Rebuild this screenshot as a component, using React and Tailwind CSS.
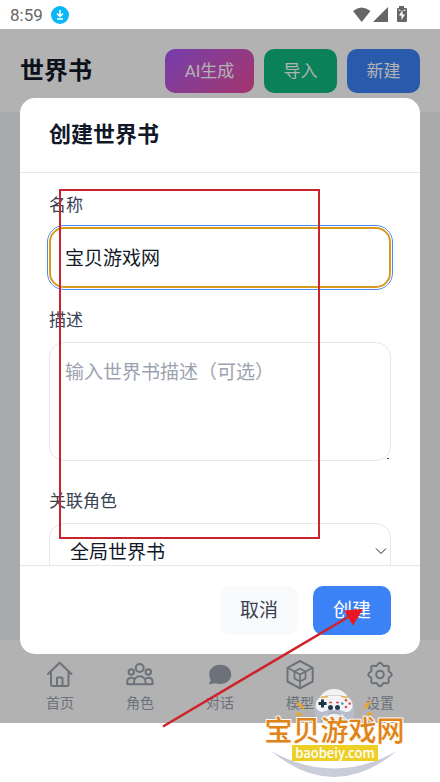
import React from 'react';

const sans = "font-['Roboto','Noto_Sans_CJK_SC',sans-serif]";

function StatusBar() {
  return (
    <div className="flex h-[29px] shrink-0 items-center justify-between bg-white pl-2.5 pr-8 text-[#666]">
      <div className="flex items-center gap-2">
        <span className="text-[17px] leading-5">8:59</span>
        <svg className="size-[18px]" viewBox="0 0 18 18" aria-hidden="true">
          <circle cx="9" cy="9" r="9" fill="#08b8f8" />
          <path d="M9 4v6M6 7.500l3 3 3-3M6 13h6" fill="none" stroke="#fff" strokeWidth="1.600" />
        </svg>
      </div>
      <svg className="h-[17px] w-[56px]" viewBox="0 0 56 17" fill="#666" aria-hidden="true">
        <path d="M1 5Q9.500-2 18.500 5L9.700 16Z" />
        <path d="M21 16L36 1V16Z" />
        <path d="M47 0h5v2h2q1 0 1 1v12q0 1-1 1h-8q-1 0-1-1V3q0-1 1-1h1z" />
        <path d="M50.500 4L47 9.500h2.500V14L53 8.500h-2.500z" fill="#fff" />
        <path d="M46.500 4l2 .5M53.500 4l-2 .5" stroke="#fff" />
      </svg>
    </div>
  );
}

function PageHeader() {
  const button = 'h-11 rounded-[10px] text-[17px] leading-6 text-white';
  return (
    <header className="flex items-center justify-between bg-white px-5 pb-[19px] pt-5">
      <h1 className="text-[24px] font-bold leading-[44px] text-[#111827]">世界书</h1>
      <div className="flex gap-2.5">
        <button type="button" className={`${button} w-[89px] bg-linear-135 from-[#a855f7] to-[#ec4899]`}>AI生成</button>
        <button type="button" className={`${button} w-[73px] bg-[#10b981]`}>导入</button>
        <button type="button" className={`${button} w-[73px] bg-[#3b82f6]`}>新建</button>
      </div>
    </header>
  );
}

function HomeIcon() {
  return (
    <svg className="size-7" viewBox="0 0 28 28" fill="none" stroke="currentColor" strokeWidth="2" strokeLinejoin="round" strokeLinecap="round" aria-hidden="true">
      <path d="M2 14L13.700 2.800 25.500 14M5 12v12.500q0 1.500 1.500 1.500h14.500q1.500 0 1.500-1.500V12" />
      <path d="M11 25.500v-7.500q0-.5.5-.5h4.500q.5 0 .5.5v7.500" />
    </svg>
  );
}

function PeopleIcon() {
  return (
    <svg className="size-7" viewBox="0 0 28 28" fill="none" stroke="currentColor" strokeWidth="2" strokeLinejoin="round" aria-hidden="true">
      <circle cx="13.700" cy="8" r="4" />
      <circle cx="5.300" cy="12" r="2.700" />
      <circle cx="22.300" cy="12" r="2.700" />
      <path d="M8 24.300v-2.300a5.800 5.800 0 0 1 11.600 0v2.300zM8 24.300H1.300v-2.800q0-3.800 4-3.800 2 0 3.200 1.300M19.600 24.300h6.900v-2.800q0-3.800-4-3.800-2 0-3.200 1.300" />
    </svg>
  );
}

function ChatIcon() {
  return (
    <svg className="size-7" viewBox="0 0 28 28" fill="currentColor" aria-hidden="true">
      <path d="M14.200 4.800C20.500 4.800 25.200 9 25.200 14.500s-4.700 9.500-11 9.500c-1.500 0-3-.3-4.200-.7L2.800 24.200l2-4.200C3.700 18.500 3.200 16.500 3.200 14.500 3.200 9 7.900 4.800 14.200 4.800z" />
    </svg>
  );
}

function CubeIcon() {
  return (
    <svg className="size-7 overflow-visible" viewBox="0 0 28 28" fill="none" stroke="currentColor" strokeWidth="2" strokeLinejoin="round" aria-hidden="true">
      <path d="M14 1L26.700 7.800v13.700L14 28.300 1.500 21.500V7.800z" />
      <path d="M14 8.500l5.500 3v7L14 21.500l-5.500-3v-7zM1.500 7.800L14 14.500 26.700 7.800M14 14.500v13.500" strokeWidth="1.700" />
    </svg>
  );
}

const gearPath = Array.from({ length: 96 }, (_, i) => {
  const angle = (i / 96) * Math.PI * 2;
  const radius = 10.5 + 1.2 * Math.cos(angle * 8);
  return `${(14 + radius * Math.cos(angle)).toFixed(2)},${(14.5 + radius * Math.sin(angle)).toFixed(2)}`;
}).join(' ');

function GearIcon() {
  return (
    <svg className="size-7" viewBox="0 0 28 28" fill="none" stroke="currentColor" strokeWidth="2" strokeLinejoin="round" aria-hidden="true">
      <polygon points={gearPath} />
      <circle cx="14" cy="14.500" r="3.800" />
    </svg>
  );
}

const tabs = [
  ['首页', HomeIcon],
  ['角色', PeopleIcon],
  ['对话', ChatIcon],
  ['模型', CubeIcon],
  ['设置', GearIcon],
];

function TabBar() {
  return (
    <nav className="grid h-[83px] shrink-0 grid-cols-5 bg-white px-5 pt-5 text-[#9ca3af]">
      {tabs.map(([label, Icon]) => (
        <a key={label} href="#" className="flex flex-col items-center gap-[5px] text-[14px] leading-5">
          <Icon />
          {label}
        </a>
      ))}
    </nav>
  );
}

function CreateDialog() {
  const label = 'mb-2.5 block text-[17px] leading-6 text-[#374151]';
  const box = 'block w-full rounded-[15px] bg-white text-[19px] leading-7 text-[#111827]';
  return (
    <form role="dialog" aria-label="创建世界书" className="flex max-h-[80%] w-full flex-col overflow-hidden rounded-[15px] bg-white">
      <div className="border-b border-[#e5e7eb] px-[29px] py-5">
        <h2 className="text-[22px] font-bold leading-[34px] text-[#111827]">创建世界书</h2>
      </div>
      <div className="flex min-h-0 flex-1 flex-col gap-5 overflow-hidden px-[29px] pt-5">
        <div>
          <label htmlFor="name" className={label}>名称</label>
          <input id="name" defaultValue="宝贝游戏网" className={`${box} h-[61px] border-2 border-[#d99a20] px-3.5 pb-0.5 outline-1 outline-offset-1 outline-[#4b8cf0]`} />
        </div>
        <div className="pb-2">
          <label htmlFor="description" className={label}>描述</label>
          <div className="relative">
            <textarea id="description" placeholder="输入世界书描述（可选）" className={`${box} h-[119px] resize-none border border-[#e5e7eb] px-[15px] py-4 placeholder:text-[#9ca3af]`} />
            <span className="absolute bottom-0.5 right-0.5 h-px w-0.5 bg-[#444]" />
          </div>
        </div>
        <div>
          <label htmlFor="role" className={label}>关联角色</label>
          <div className="relative">
            <select id="role" className={`${box} h-[59px] appearance-none border border-[#e5e7eb] px-5`}>
              <option>全局世界书</option>
            </select>
            <svg className="pointer-events-none absolute right-1 top-[22px] size-3" viewBox="0 0 12 12" fill="none" stroke="#222" aria-hidden="true">
              <path d="M1 3.500l5 5 5-5" />
            </svg>
          </div>
        </div>
      </div>
      <div className="flex justify-end gap-[15px] border-t border-[#e5e7eb] px-[29px] pb-[19px] pt-5 text-[19px] leading-[29px]">
        <button type="button" className="rounded-[10px] bg-[#f9fafb] px-5 py-2.5 text-[#374151]">取消</button>
        <button type="submit" className="rounded-[10px] bg-[#3b82f6] px-5 py-2.5 text-white">创建</button>
      </div>
    </form>
  );
}

function Watermark() {
  return (
    <div className="pointer-events-none absolute bottom-0 right-[30px] h-[97px] w-[150px]">
      <svg className="absolute inset-0 size-full" viewBox="0 0 150 97" aria-hidden="true">
        <path d="M11 66Q74 101 137 66Q74 118 11 66z" fill="#c9ccd9" />
        <ellipse cx="74" cy="22" rx="17" ry="18" fill="#f3f3f3" />
        <path d="M60 12Q74 8 88 12Q93 14 94 23L94 36Q93 40 89 37L82 29H67L60 37Q56 40 55 36L55 23Q56 14 60 12z" fill="#b9bdcb" />
        <path d="M61 12Q74 9 87 12Q93 15 92.500 22Q91 27 86 27L80 25H68L62 27Q57 26 56 22Q55 15 61 12z" fill="#f4f4f7" />
        <path d="M62 39Q63 29 74 28Q86 29 87 39z" fill="#eff0f3" />
        <path d="M62 37Q66 28 74 28Q82 28 86 37" fill="none" stroke="#8d91a1" strokeWidth="0.800" />
        <path d="M61 12.500l7-1M81 11.500l7 1" stroke="#e8b349" strokeWidth="1.500" />
        <path d="M58.500 18.500h8M62.500 14.500v8" stroke="#1c3448" strokeWidth="3" />
        <circle cx="86" cy="15.300" r="1.300" fill="#e04c50" />
        <circle cx="86" cy="22" r="1.300" fill="#e04c50" />
        <circle cx="82.300" cy="18.600" r="1.300" fill="#2ba6bd" />
        <circle cx="89.700" cy="18.600" r="1.300" fill="#d84a60" />
        <path d="M69 17.500h3M76 17.500h3" stroke="#d34b58" strokeWidth="1.500" />
        <circle cx="70.500" cy="22.500" r="2.500" fill="#1e3d50" />
        <circle cx="77.500" cy="22.500" r="2.500" fill="#1e3d50" />
        <path d="M35 16l6 3v-1l4 7-5-3v1zM35 29l4-2 5 4-4-1-1 1zM112 15l-5 3v-1l-5 8 5-3v1zM113 28l-4-1-4 4 4-1 1 1z" fill="#eda52b" />
      </svg>
      <div className="absolute inset-x-0 top-[34px] flex flex-col items-center">
        <p className="whitespace-nowrap pr-px text-[28px] font-medium leading-[26px] text-[#de841b] [paint-order:stroke] [-webkit-text-stroke:2px_#fff8ee]">
          宝贝游戏网
        </p>
        <p className="bg-[#edcf25] px-[3px] font-['Noto_Sans_CJK_SC',sans-serif] text-[13px] font-medium leading-4 text-white">
          baobeiy.com
        </p>
      </div>
    </div>
  );
}

export default function App() {
  return (
    <div className={`relative flex h-screen flex-col overflow-hidden bg-white ${sans}`}>
      <StatusBar />
      <main className="relative flex min-h-0 flex-1 flex-col bg-[#f3f4f6]">
        <PageHeader />
        <div className="flex-1" />
        <TabBar />
        <div className="absolute inset-0 flex items-center justify-center bg-black/30 px-5">
          <CreateDialog />
        </div>
      </main>
      <div className="h-[59px] shrink-0 bg-white" />
      <div className="pointer-events-none absolute left-[59px] top-[189px] h-[350px] w-[261px] border-2 border-[#c9232d]" />
      <svg className="pointer-events-none absolute left-[160px] top-[600px] h-[130px] w-[210px]" viewBox="0 0 210 130" aria-hidden="true">
        <path d="M3 126.500L190 16" stroke="#cf222b" strokeWidth="2.500" />
        <path d="M203 9L184 10.500l9 15z" fill="#ea1720" />
      </svg>
      <Watermark />
    </div>
  );
}
